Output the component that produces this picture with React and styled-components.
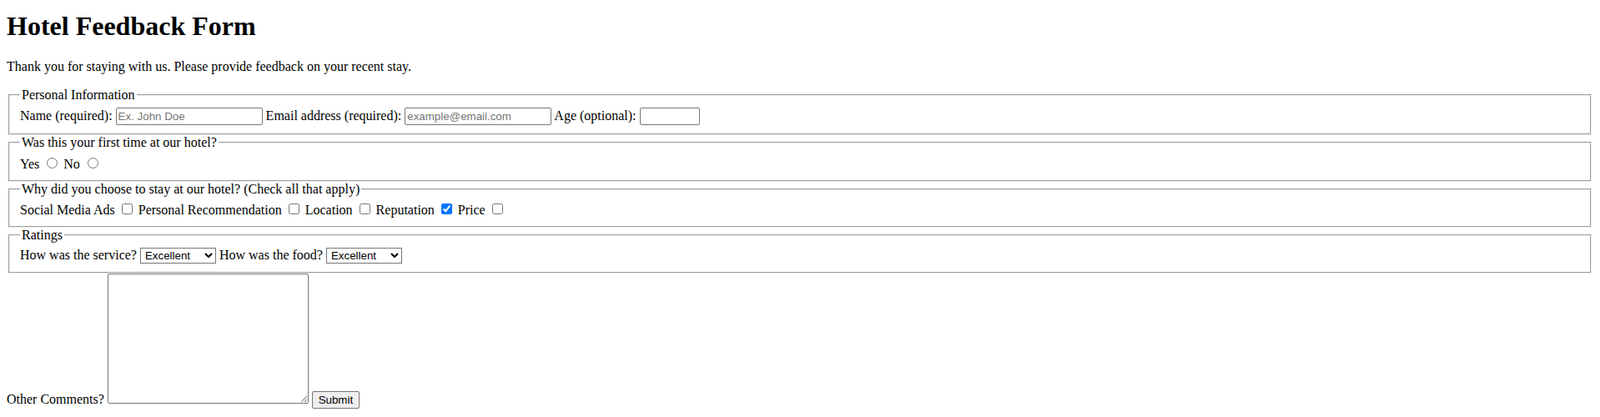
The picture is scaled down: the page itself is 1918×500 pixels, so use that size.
import React from "react";
import styled, { createGlobalStyle } from "styled-components";

const Global = createGlobalStyle`
  html, body { background: #fff; }
  body {
    margin: 0;
    padding: 0 8px 8px;
    font-family: "Liberation Serif", "Times New Roman", serif;
    font-size: 16px;
    color: #000;
  }
`;

const Title = styled.h1`
  font-size: 32px;
  font-weight: bold;
  margin: 13px 0 21.44px;
`;

const Intro = styled.p`
  margin: 0 0 16px;
`;

const Group = styled.fieldset`
  margin: 0 2px;
  padding: 0.35em 0.75em 0.625em;
  border: 2px groove rgb(240, 240, 240);
  min-inline-size: min-content;
`;

const Legend = styled.legend`
  padding: 0 2px;
`;

const TextField = styled.input`
  box-sizing: border-box;
  width: ${(p) => (p.$narrow ? "72px" : "176px")};
  height: 21px;
  padding: 1px 2px;
  border: 1px solid #767676;
  border-radius: 2px;
  font-family: "Liberation Sans", Arial, sans-serif;
  font-size: 13.33px;
  &::placeholder { color: #757575; }
`;

const Select = styled.select`
  box-sizing: border-box;
  width: 91px;
  height: 19px;
  padding: 0 0 0 1px;
  border: 1px solid #767676;
  border-radius: 0;
  background: #fff;
  font-family: "Liberation Sans", Arial, sans-serif;
  font-size: 13.33px;
`;

const Comments = styled.textarea`
  box-sizing: border-box;
  width: 241px;
  height: 156px;
  padding: 2px;
  border: 1px solid #767676;
  border-radius: 2px;
  font-family: "Liberation Mono", monospace;
  font-size: 13.33px;
  vertical-align: baseline;
`;

const SubmitButton = styled.button`
  box-sizing: border-box;
  width: 57px;
  height: 21px;
  padding: 1px 6px;
  border: 1px solid #767676;
  border-radius: 2px;
  background: #efefef;
  font-family: "Liberation Sans", Arial, sans-serif;
  font-size: 13.33px;
  color: #000;
`;

const ratingOptions = [
  ["excellent", "Excellent"],
  ["good", "Good"],
  ["fair", "Fair"],
  ["poor", "Poor"],
];

const reasons = [
  ["Social Media Ads", false],
  ["Personal Recommendation", false],
  ["Location", false],
  ["Reputation", true],
  ["Price", false],
];

function Rating({ label }) {
  return (
    <label>
      {label}{" "}
      <Select defaultValue="excellent">
        {ratingOptions.map(([v, t]) => (
          <option key={v} value={v}>
            {t}
          </option>
        ))}
      </Select>
    </label>
  );
}

export default function App() {
  return (
    <>
      <Global />
      <Title>Hotel Feedback Form</Title>
      <Intro>Thank you for staying with us. Please provide feedback on your recent stay.</Intro>
      <form onSubmit={(e) => e.preventDefault()}>
        <Group>
          <Legend>Personal Information</Legend>
          <label>
            Name (required): <TextField type="text" placeholder="Ex. John Doe" />
          </label>{" "}
          <label>
            Email address (required): <TextField type="email" placeholder="example@email.com" />
          </label>{" "}
          <label>
            Age (optional): <TextField type="number" $narrow />
          </label>
        </Group>
        <Group>
          <Legend>Was this your first time at our hotel?</Legend>
          <label>
            Yes <input type="radio" name="first" />
          </label>{" "}
          <label>
            No <input type="radio" name="first" />
          </label>
        </Group>
        <Group>
          <Legend>Why did you choose to stay at our hotel? (Check all that apply)</Legend>
          {reasons.map(([text, checked], i) => (
            <React.Fragment key={text}>
              {i > 0 && " "}
              <label>
                {text} <input type="checkbox" defaultChecked={checked} />
              </label>
            </React.Fragment>
          ))}
        </Group>
        <Group>
          <Legend>Ratings</Legend>
          <Rating label="How was the service?" /> <Rating label="How was the food?" />
        </Group>
        <label>
          Other Comments? <Comments />
        </label>{" "}
        <SubmitButton type="submit">Submit</SubmitButton>
      </form>
    </>
  );
}
